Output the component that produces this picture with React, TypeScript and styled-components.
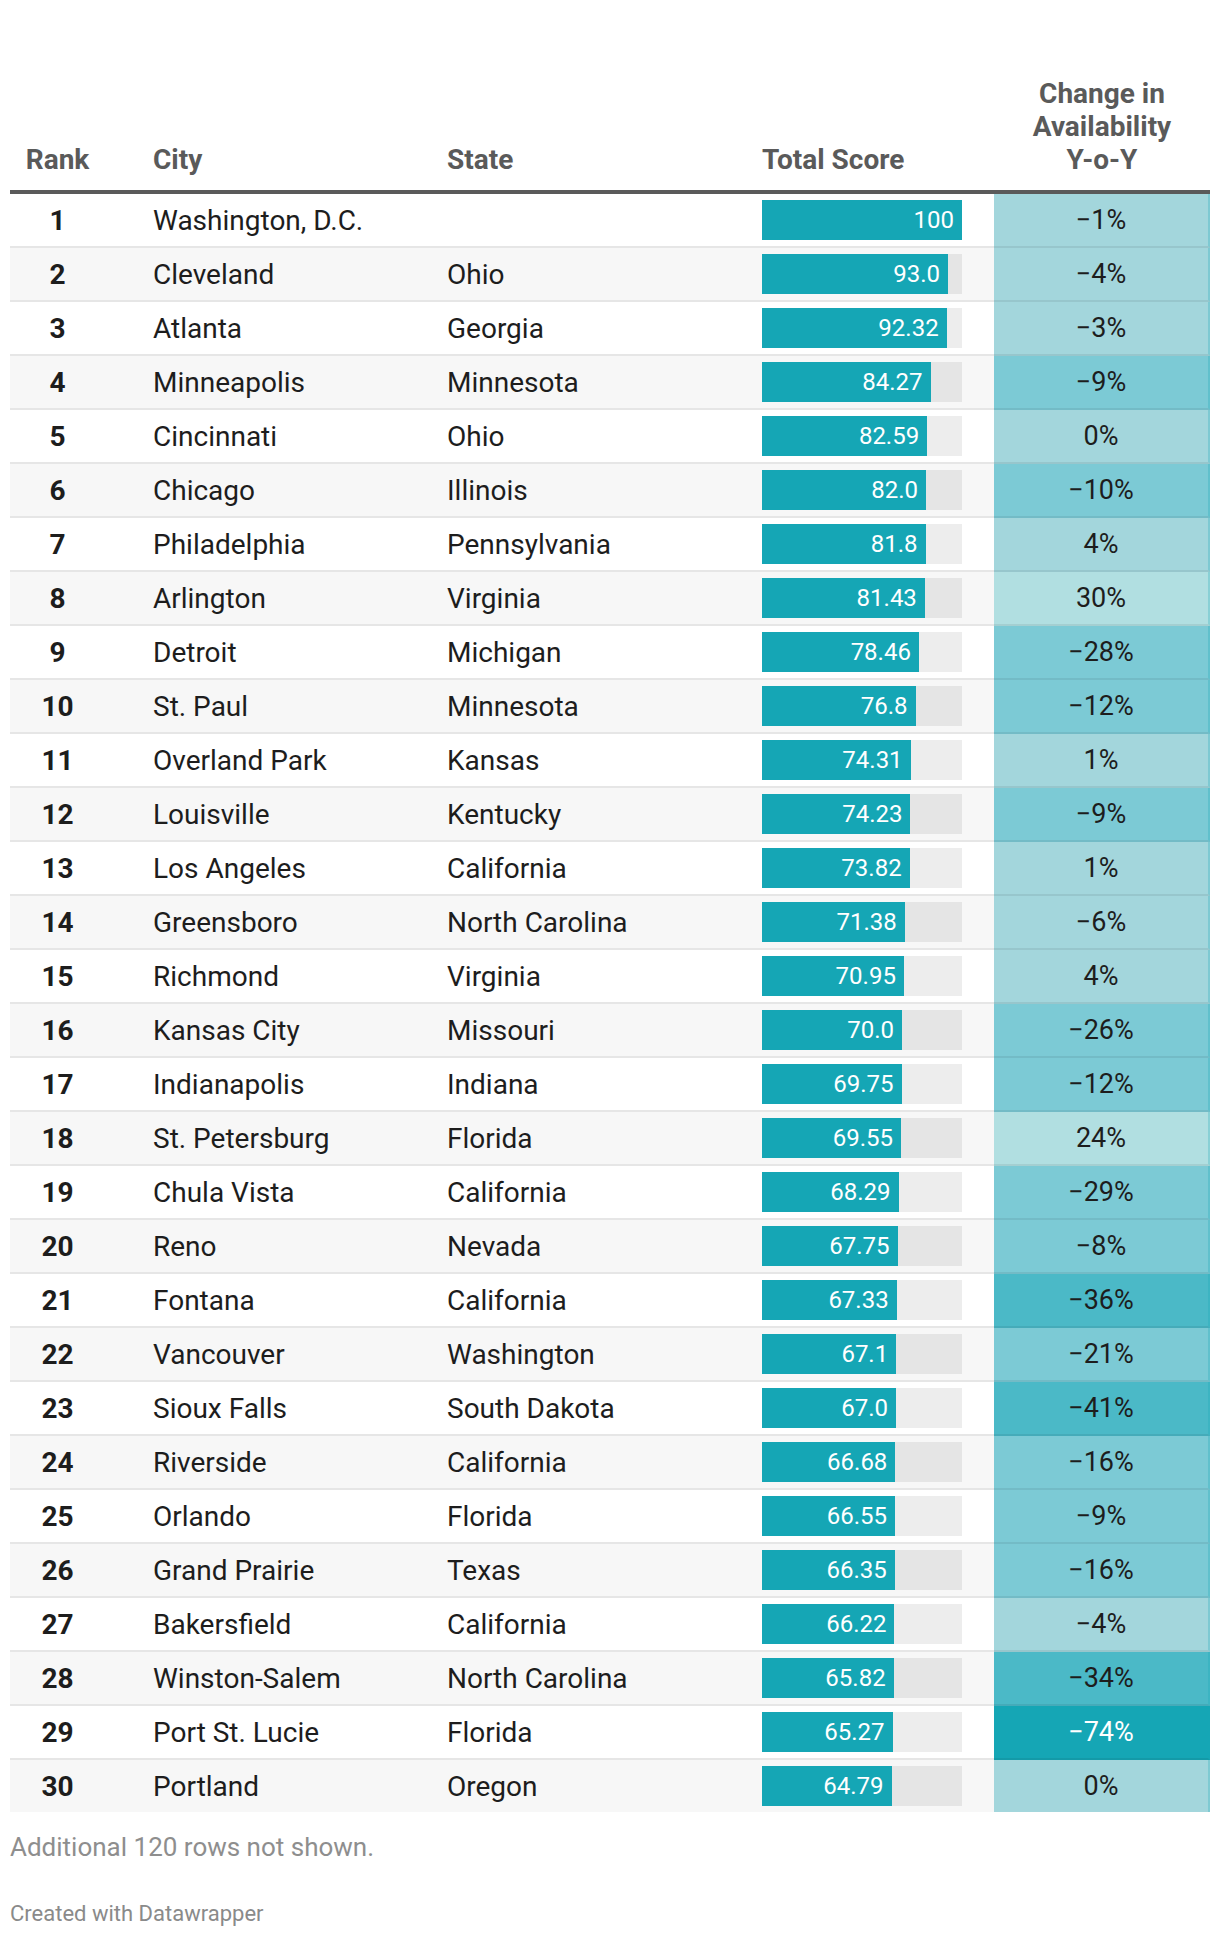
import React from "react";
import styled, { createGlobalStyle } from "styled-components";

const GlobalStyle = createGlobalStyle`
  html, body {
    margin: 0;
    padding: 0;
    background: #ffffff;
  }
  body {
    font-family: Roboto, "Liberation Sans", Arial, sans-serif;
    color: #1d1d1d;
  }
`;

type Row = {
  rank: number;
  city: string;
  state: string;
  score: string;
  value: number;
  change: string;
  tone: "lightest" | "light" | "medium" | "strong" | "dark";
};

const rows: Row[] = [
  { rank: 1, city: "Washington, D.C.", state: "", score: "100", value: 100, change: "−1%", tone: "light" },
  { rank: 2, city: "Cleveland", state: "Ohio", score: "93.0", value: 93.0, change: "−4%", tone: "light" },
  { rank: 3, city: "Atlanta", state: "Georgia", score: "92.32", value: 92.32, change: "−3%", tone: "light" },
  { rank: 4, city: "Minneapolis", state: "Minnesota", score: "84.27", value: 84.27, change: "−9%", tone: "medium" },
  { rank: 5, city: "Cincinnati", state: "Ohio", score: "82.59", value: 82.59, change: "0%", tone: "light" },
  { rank: 6, city: "Chicago", state: "Illinois", score: "82.0", value: 82.0, change: "−10%", tone: "medium" },
  { rank: 7, city: "Philadelphia", state: "Pennsylvania", score: "81.8", value: 81.8, change: "4%", tone: "light" },
  { rank: 8, city: "Arlington", state: "Virginia", score: "81.43", value: 81.43, change: "30%", tone: "lightest" },
  { rank: 9, city: "Detroit", state: "Michigan", score: "78.46", value: 78.46, change: "−28%", tone: "medium" },
  { rank: 10, city: "St. Paul", state: "Minnesota", score: "76.8", value: 76.8, change: "−12%", tone: "medium" },
  { rank: 11, city: "Overland Park", state: "Kansas", score: "74.31", value: 74.31, change: "1%", tone: "light" },
  { rank: 12, city: "Louisville", state: "Kentucky", score: "74.23", value: 74.23, change: "−9%", tone: "medium" },
  { rank: 13, city: "Los Angeles", state: "California", score: "73.82", value: 73.82, change: "1%", tone: "light" },
  { rank: 14, city: "Greensboro", state: "North Carolina", score: "71.38", value: 71.38, change: "−6%", tone: "light" },
  { rank: 15, city: "Richmond", state: "Virginia", score: "70.95", value: 70.95, change: "4%", tone: "light" },
  { rank: 16, city: "Kansas City", state: "Missouri", score: "70.0", value: 70.0, change: "−26%", tone: "medium" },
  { rank: 17, city: "Indianapolis", state: "Indiana", score: "69.75", value: 69.75, change: "−12%", tone: "medium" },
  { rank: 18, city: "St. Petersburg", state: "Florida", score: "69.55", value: 69.55, change: "24%", tone: "lightest" },
  { rank: 19, city: "Chula Vista", state: "California", score: "68.29", value: 68.29, change: "−29%", tone: "medium" },
  { rank: 20, city: "Reno", state: "Nevada", score: "67.75", value: 67.75, change: "−8%", tone: "medium" },
  { rank: 21, city: "Fontana", state: "California", score: "67.33", value: 67.33, change: "−36%", tone: "strong" },
  { rank: 22, city: "Vancouver", state: "Washington", score: "67.1", value: 67.1, change: "−21%", tone: "medium" },
  { rank: 23, city: "Sioux Falls", state: "South Dakota", score: "67.0", value: 67.0, change: "−41%", tone: "strong" },
  { rank: 24, city: "Riverside", state: "California", score: "66.68", value: 66.68, change: "−16%", tone: "medium" },
  { rank: 25, city: "Orlando", state: "Florida", score: "66.55", value: 66.55, change: "−9%", tone: "medium" },
  { rank: 26, city: "Grand Prairie", state: "Texas", score: "66.35", value: 66.35, change: "−16%", tone: "medium" },
  { rank: 27, city: "Bakersfield", state: "California", score: "66.22", value: 66.22, change: "−4%", tone: "light" },
  { rank: 28, city: "Winston-Salem", state: "North Carolina", score: "65.82", value: 65.82, change: "−34%", tone: "strong" },
  { rank: 29, city: "Port St. Lucie", state: "Florida", score: "65.27", value: 65.27, change: "−74%", tone: "dark" },
  { rank: 30, city: "Portland", state: "Oregon", score: "64.79", value: 64.79, change: "0%", tone: "light" },
];

const toneColors: Record<Row["tone"], string> = {
  lightest: "#b1dfe1",
  light: "#a3d6dc",
  medium: "#7ccad5",
  strong: "#4bb9c7",
  dark: "#15a6b5",
};

const Page = styled.div`
  padding: 77px 10px 0 10px;
  width: 1200px;
`;

const Table = styled.div`
  display: flex;
  flex-direction: column;
`;

const columns = "95px 342px 315px 232px 216px";

const HeaderRow = styled.div`
  display: grid;
  grid-template-columns: ${columns};
  align-items: end;
  padding-bottom: 14px;
  border-bottom: 4px solid #5a5a5a;
  font-size: 28px;
  font-weight: 700;
  line-height: 33px;
  color: #5a5a5a;
`;

const HeadCell = styled.div<{ $align?: "left" | "center"; $pad?: number }>`
  text-align: ${(p) => p.$align ?? "left"};
  padding-left: ${(p) => p.$pad ?? 0}px;
  white-space: nowrap;
`;

const BodyRow = styled.div<{ $striped: boolean; $last: boolean }>`
  display: grid;
  grid-template-columns: ${columns};
  align-items: center;
  height: 52px;
  background: ${(p) => (p.$striped ? "#f7f7f7" : "#ffffff")};
  border-bottom: ${(p) => (p.$last ? "none" : "2px solid #e6e6e6")};
  font-size: 28px;
  line-height: 30px;
`;

const RankCell = styled.div`
  text-align: center;
  font-weight: 700;
  padding-top: 2px;
`;

const TextCell = styled.div<{ $pad?: number }>`
  padding-left: ${(p) => p.$pad ?? 0}px;
  padding-top: 2px;
  white-space: nowrap;
`;

const ScoreCell = styled.div`
  display: flex;
  align-items: center;
`;

const BarTrack = styled.div`
  width: 200px;
  height: 40px;
  background: rgba(0, 0, 0, 0.07);
  display: flex;
`;

const BarFill = styled.div`
  height: 100%;
  background: #15a6b5;
  color: #ffffff;
  display: flex;
  align-items: center;
  justify-content: flex-end;
  padding-right: 8px;
  box-sizing: border-box;
  font-size: 24px;
  white-space: nowrap;
`;

const ChangeCell = styled.div<{ $tone: Row["tone"]; $last: boolean }>`
  align-self: stretch;
  margin-bottom: ${(p) => (p.$last ? 0 : -2)}px;
  background: ${(p) => toneColors[p.$tone]};
  color: ${(p) => (p.$tone === "dark" ? "#ffffff" : "#1d1d1d")};
  border-bottom: ${(p) => (p.$last ? "none" : "2px solid rgba(0, 0, 0, 0.07)")};
  border-right: 2px solid rgba(21, 166, 181, 0.25);
  display: flex;
  align-items: center;
  justify-content: center;
  font-size: 27px;
  box-sizing: border-box;
`;

const Notes = styled.div`
  padding-top: 20px;
  font-size: 26px;
  line-height: 30px;
  color: #8e8e8e;
`;

const Credit = styled.div`
  padding-top: 39px;
  font-size: 22px;
  line-height: 26px;
  color: #8a8a8a;
`;

export default function App() {
  return (
    <>
      <GlobalStyle />
      <Page>
        <Table>
          <HeaderRow>
            <HeadCell $align="center">Rank</HeadCell>
            <HeadCell $pad={48}>City</HeadCell>
            <HeadCell>State</HeadCell>
            <HeadCell>Total Score</HeadCell>
            <HeadCell $align="center">
              Change in
              <br />
              Availability
              <br />
              Y-o-Y
            </HeadCell>
          </HeaderRow>
          {rows.map((r, i) => {
            const last = i === rows.length - 1;
            return (
              <BodyRow key={r.rank} $striped={i % 2 === 1} $last={last}>
                <RankCell>{r.rank}</RankCell>
                <TextCell $pad={48}>{r.city}</TextCell>
                <TextCell>{r.state}</TextCell>
                <ScoreCell>
                  <BarTrack>
                    <BarFill style={{ width: `${r.value * 2}px` }}>{r.score}</BarFill>
                  </BarTrack>
                </ScoreCell>
                <ChangeCell $tone={r.tone} $last={last}>
                  {r.change}
                </ChangeCell>
              </BodyRow>
            );
          })}
        </Table>
        <Notes>Additional 120 rows not shown.</Notes>
        <Credit>Created with Datawrapper</Credit>
      </Page>
    </>
  );
}
